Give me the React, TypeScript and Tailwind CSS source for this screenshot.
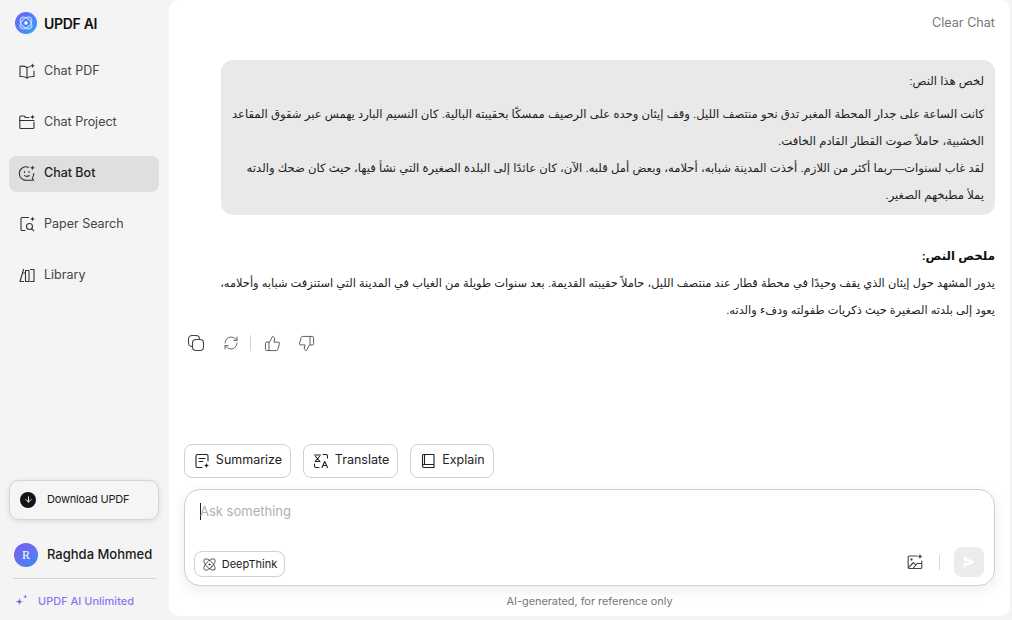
import { RefreshCw, ThumbsUp, ThumbsDown, Atom, ArrowDown } from 'lucide-react';

const FONT = "font-['Inter','Liberation_Sans',sans-serif]";
const AR = "font-['Liberation_Sans','DejaVu_Sans',sans-serif]";

const Spark = ({ x, y, s = 3 }: { x: number; y: number; s?: number }) => (
  <path
    d={`M${x} ${y - s}C${x + 0.3} ${y - 1} ${x + 1} ${y - 0.3} ${x + s} ${y}C${x + 1} ${y + 0.3} ${x + 0.3} ${y + 1} ${x} ${y + s}C${x - 0.3} ${y + 1} ${x - 1} ${y + 0.3} ${x - s} ${y}C${x - 1} ${y - 0.3} ${x - 0.3} ${y - 1} ${x} ${y - s}Z`}
    fill="currentColor"
    stroke="none"
  />
);

const Icon = ({ children, size = 18 }: { children: React.ReactNode; size?: number }) => (
  <svg width={size} height={size} viewBox="0 0 18 18" fill="none" stroke="currentColor" strokeWidth="1.1" strokeLinecap="round" strokeLinejoin="round">
    {children}
  </svg>
);

const navItems = [
  {
    label: 'Chat PDF',
    icon: (
      <Icon>
        <path d="M9 5.5C7.5 4.5 5 4 2 4.2V14.5C5 14.3 7.5 14.8 9 16C10.5 14.8 13 14.3 16 14.5V9" />
        <path d="M9 5.5V16M12 4.8C11 5 10 5.2 9 5.5" />
        <Spark x={14.5} y={3.8} s={2.6} />
      </Icon>
    ),
  },
  {
    label: 'Chat Project',
    icon: (
      <Icon>
        <path d="M11 4.5H7.5L6 3H2.8C2.2 3 1.8 3.4 1.8 4V14.5C1.8 15.1 2.2 15.5 2.8 15.5H15C15.6 15.5 16 15.1 16 14.5V9" />
        <path d="M1.8 7.5H16" />
        <Spark x={14.5} y={4} s={2.6} />
      </Icon>
    ),
  },
  {
    label: 'Chat Bot',
    icon: (
      <Icon>
        <path d="M10.5 3.2A6.8 6.8 0 1 0 9 16.3H15.5L14.2 14A6.8 6.8 0 0 0 15.8 9.5" />
        <path d="M6.5 11.5C7.5 12.6 10 12.6 11.2 11.5" />
        <path d="M6.5 7.5V8.5M11 7.5V8.5" />
        <Spark x={14.5} y={3.8} s={2.6} />
      </Icon>
    ),
  },
  {
    label: 'Paper Search',
    icon: (
      <Icon>
        <path d="M10.5 2.5H4C3.4 2.5 3 2.9 3 3.5V14.5C3 15.1 3.4 15.5 4 15.5H7" />
        <circle cx="11.5" cy="11.5" r="3" />
        <path d="M13.8 13.8L15.8 15.8" />
        <Spark x={14.5} y={4} s={2.6} />
      </Icon>
    ),
  },
  {
    label: 'Library',
    icon: (
      <Icon>
        <path d="M5.5 3.5L2 15.5H5.5" />
        <path d="M7.5 4.5H11V15.5H7.5Z" />
        <path d="M7.5 7H5.5M12.5 3.5H16V15.5H12.5" />
      </Icon>
    ),
  },
];

const actions = [
  {
    label: 'Summarize',
    width: 'w-[107px]',
    icon: (
      <Icon>
        <path d="M15 9V4C15 3 14.3 2.5 13.5 2.5H4.5C3.6 2.5 3 3 3 4V14C3 15 3.6 15.5 4.5 15.5H9" />
        <path d="M6 6.5H12M6 9.5H10" />
        <Spark x={13.5} y={13.5} s={3} />
      </Icon>
    ),
  },
  {
    label: 'Translate',
    width: 'w-[95px]',
    icon: (
      <Icon>
        <path d="M2.5 3H8.5M3.5 4.5L7.5 9M7.5 4.5L3.5 9M3 9.5H8" />
        <path d="M11 2.5H14C15 2.5 15.5 3 15.5 4V6" />
        <path d="M7 15.5H4C3 15.5 2.5 15 2.5 14V12" />
        <path d="M10 15.5L12.7 9.5L15.5 15.5M11 13.5H14.5" />
      </Icon>
    ),
  },
  {
    label: 'Explain',
    width: 'w-[84px]',
    icon: (
      <Icon>
        <path d="M3.5 14V3.5C3.5 2.9 3.9 2.5 4.5 2.5H15V12.5H5C4.1 12.5 3.5 13.1 3.5 14C3.5 14.9 4.1 15.5 5 15.5H15V12.5" />
        <path d="M5.5 2.5V12.5" />
      </Icon>
    ),
  },
];

export default function App() {
  return (
    <div className={`flex h-[620px] w-[1012px] overflow-hidden bg-[#f4f4f4] ${FONT}`}>
      {/* Sidebar */}
      <aside className="flex h-full w-[169px] shrink-0 flex-col">
        <div className="flex h-[46px] items-center gap-[6px] pl-[15px]">
          <svg width="24" height="24" viewBox="0 0 24 24" className="ml-[-1px]">
            <defs>
              <linearGradient id="logo" x1="0" y1="0" x2="1" y2="1">
                <stop offset="0" stopColor="#6f5cf2" />
                <stop offset="1" stopColor="#2fa4ff" />
              </linearGradient>
            </defs>
            <circle cx="12" cy="12" r="11" fill="url(#logo)" />
            <ellipse cx="12" cy="12" rx="7" ry="4.5" fill="none" stroke="#d5e4ff" strokeWidth="1" transform="rotate(45 12 12)" />
            <ellipse cx="12" cy="12" rx="7" ry="4.5" fill="none" stroke="#d5e4ff" strokeWidth="1" transform="rotate(-45 12 12)" />
            <circle cx="12" cy="12" r="1.7" fill="#fff" />
          </svg>
          <span className="text-[14px] font-semibold tracking-[-0.3px] text-[#111]">UPDF AI</span>
        </div>

        <nav className="mt-[8px] flex flex-col gap-[15px] pl-[9px]">
          {navItems.map(item => (
            <div
              key={item.label}
              className={`flex h-[36px] w-[150px] items-center gap-[8px] rounded-[8px] pb-[2px] pl-[9px] text-[12.5px] ${
                item.label === 'Chat Bot' ? 'bg-[#dfdfdf] font-medium text-[#222]' : 'text-[#444]'
              }`}
            >
              <span className="text-[#333]">{item.icon}</span>
              {item.label}
            </div>
          ))}
        </nav>

        <div className="mt-auto pl-[9px] pr-[10px]">
          <div className="flex h-[40px] w-[150px] items-center gap-[11px] whitespace-nowrap rounded-[10px] border border-[#d6d6d6] bg-[#f5f5f5] pb-[1px] pl-[10px] text-[11px] tracking-[-0.2px] text-[#222] shadow-[0_1px_5px_rgba(0,0,0,0.12)]">
            <span className="flex h-[16px] w-[16px] items-center justify-center rounded-full bg-[#141414] text-white">
              <ArrowDown size={9} strokeWidth={2.5} />
            </span>
            Download UPDF
          </div>
          <div className="mt-[23px] flex items-center gap-[9px] whitespace-nowrap pb-[1px] pl-[5px]">
            <div className="flex h-[24px] w-[24px] shrink-0 items-center justify-center rounded-full bg-gradient-to-br from-[#7a55f0] to-[#2f8bf5] font-['Liberation_Serif',serif] text-[12px] text-white">
              R
            </div>
            <span className="text-[13px] font-medium text-[#1a1a1a]">Raghda Mohmed</span>
          </div>
          <div className="mt-[10px] ml-[4px] h-px w-[143px] bg-[#d2d2d2]" />
          <div className="mt-[13px] flex h-[18px] items-center gap-[10px] whitespace-nowrap pl-[5px] text-[11px] font-medium text-[#8f74f5]">
            <svg width="14" height="14" viewBox="0 0 18 18" className="text-[#7c5cf0]">
              <Spark x={7} y={10} s={6} />
              <Spark x={14.5} y={3.5} s={2.5} />
            </svg>
            UPDF AI Unlimited
          </div>
          <div className="h-[10px]" />
        </div>
      </aside>

      {/* Main */}
      <main className="mb-[4px] mr-[2px] flex min-w-0 flex-1 flex-col rounded-[10px] bg-white pl-[15px] pr-[15px]">
        <div className="flex h-[45px] items-center justify-end pt-[1px] text-[12.6px] text-[#777]">Clear Chat</div>

        <div className="flex justify-end pt-[15px]">
          <div dir="rtl" className={`w-[774px] rounded-[12px] bg-[#e9e9e9] py-[7px] pl-[10px] pr-[11px] text-[11.6px] leading-[27px] text-[#222] ${AR}`}>
            <p className="mb-[6px] whitespace-nowrap">لخص هذا النص:</p>
            <p className="whitespace-nowrap">كانت الساعة على جدار المحطة المغبر تدق نحو منتصف الليل. وقف إيثان وحده على الرصيف ممسكًا بحقيبته البالية. كان النسيم البارد يهمس عبر شقوق المقاعد</p>
            <p className="whitespace-nowrap">الخشبية، حاملاً صوت القطار القادم الخافت.</p>
            <p className="whitespace-nowrap">لقد غاب لسنوات—ربما أكثر من اللازم. أخذت المدينة شبابه، أحلامه، وبعض أمل قلبه. الآن، كان عائدًا إلى البلدة الصغيرة التي نشأ فيها، حيث كان ضحك والدته</p>
            <p className="whitespace-nowrap">يملأ مطبخهم الصغير.</p>
          </div>
        </div>

        <div dir="rtl" className={`mt-[28px] text-[11.4px] leading-[27px] text-[#222] ${AR}`}>
          <p className="text-[11.8px] font-bold text-[#111]">ملخص النص:</p>
          <p className="whitespace-nowrap">يدور المشهد حول إيثان الذي يقف وحيدًا في محطة قطار عند منتصف الليل، حاملاً حقيبته القديمة. بعد سنوات طويلة من الغياب في المدينة التي استنزفت شبابه وأحلامه،</p>
          <p className="whitespace-nowrap">يعود إلى بلدته الصغيرة حيث ذكريات طفولته ودفء والدته.</p>
        </div>

        <div className="mt-[10px] flex items-center pl-[3px] text-[#444]">
          <span className="mr-[18px]">
            <Icon>
              <rect x="1.5" y="1.5" width="11" height="11" rx="3.5" />
              <rect x="5.5" y="5.5" width="11" height="11" rx="3.5" fill="#fff" />
            </Icon>
          </span>
          <RefreshCw size={16} strokeWidth={1.3} className="mr-[11px] text-[#555]" />
          <div className="mr-[13px] h-[16px] w-px bg-[#d5d5d5]" />
          <ThumbsUp size={17} strokeWidth={1.2} className="mr-[17px]" />
          <ThumbsDown size={17} strokeWidth={1.2} />
        </div>

        <div className="mt-auto flex gap-[12px]">
          {actions.map(action => (
            <div
              key={action.label}
              className={`flex h-[34px] ${action.width} items-center justify-center gap-[5px] rounded-[8px] border border-[#d0d0d0] bg-white pb-[1px] text-[12.5px] text-[#222]`}
            >
              {action.icon}
              {action.label}
            </div>
          ))}
        </div>

        <div className="mt-[11px] flex h-[97px] flex-col rounded-[16px] border border-[#cfcfcf] bg-white pb-[8px] pl-[9px] pr-[10px] pt-[11px] shadow-[0_4px_14px_rgba(0,0,0,0.08)]">
          <div className="flex items-center pl-[6px] text-[13px] leading-[20px] text-[#adb1b8]">
            <span className="mr-[-1px] h-[17px] w-px bg-[#222]" />
            Ask something
          </div>
          <div className="mt-auto flex items-end">
            <div className="flex h-[26px] w-[91px] items-center justify-center gap-[5px] rounded-[8px] border border-[#d0d0d0] text-[11px] text-[#222]">
              <Atom size={15} strokeWidth={1.3} />
              DeepThink
            </div>
            <div className="ml-auto flex items-center">
              <span className="mr-[1px] text-[#444]">
                <Icon>
                  <path d="M11 3H3.5C2.7 3 2.2 3.6 2.2 4.3V14.2C2.2 15 2.7 15.5 3.5 15.5H14.5C15.3 15.5 15.8 15 15.8 14.2V8" />
                  <circle cx="5.5" cy="6.5" r="0.6" fill="currentColor" />
                  <path d="M2.5 14.5L7.5 9.5L9.5 12M7 15.5L11 10.5H15.5" />
                  <Spark x={14} y={3.5} s={3} />
                </Icon>
              </span>
              <div className="mx-[14px] h-[15px] w-px bg-[#d5d5d5]" />
              <div className="flex h-[30px] w-[30px] items-center justify-center rounded-[8px] bg-[#ececec] text-white">
                <svg width="14" height="14" viewBox="0 0 14 14">
                  <path d="M1 1.2L13 7L1 12.8L2.6 7.8H7V6.2H2.6Z" fill="currentColor" />
                </svg>
              </div>
            </div>
          </div>
        </div>

        <div className="flex h-[30px] items-center justify-center text-[10.9px] text-[#777]">AI-generated, for reference only</div>
      </main>
    </div>
  );
}
